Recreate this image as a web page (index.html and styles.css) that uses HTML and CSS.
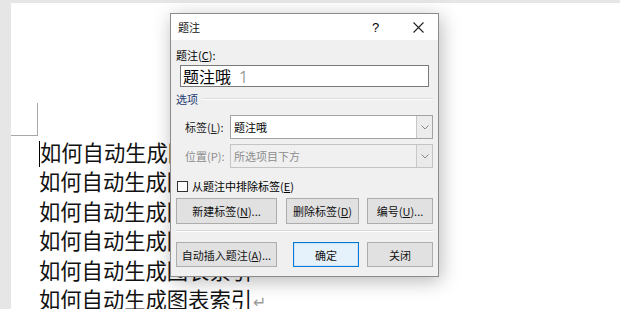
FILE: index.html
```html
<!DOCTYPE html>
<html lang="zh-CN">
<head>
<meta charset="utf-8">
<link rel="stylesheet" href="styles.css">
</head>
<body>
<div class="page">
  <div class="corner"></div>
  <div class="doc">
    <div class="line"><span class="cursor"></span>如何自动生成图表索引<span class="ret">↵</span></div>
    <div class="line">如何自动生成图表索引<span class="ret">↵</span></div>
    <div class="line">如何自动生成图表索引<span class="ret">↵</span></div>
    <div class="line">如何自动生成图表索引<span class="ret">↵</span></div>
    <div class="line">如何自动生成图表索引<span class="ret">↵</span></div>
    <div class="line">如何自动生成图表索引<span class="ret">↵</span></div>
  </div>
</div>

<div class="dialog">
  <div class="titlebar">
    <span class="title">题注</span>
    <span class="help">?</span>
    <span class="close"><svg width="11" height="11" viewBox="0 0 11 11"><path d="M0.5 0.5 L10.5 10.5 M10.5 0.5 L0.5 10.5" stroke="#222" stroke-width="1.1" fill="none"/></svg></span>
  </div>
  <div class="body">
    <div class="lbl">题注(<u>C</u>):</div>
    <div class="caption-input"><span class="cap-text">题注哦</span><span class="cap-num">1</span></div>
    <div class="group"><span class="group-title">选项</span><span class="group-line"></span></div>
    <div class="field">
      <span class="flabel">标签(<u>L</u>):</span>
      <div class="combo"><span class="combo-text">题注哦</span><span class="combo-btn"><svg width="8" height="5" viewBox="0 0 8 5"><path d="M0.5 0.5 L4 4 L7.5 0.5" stroke="#888" fill="none"/></svg></span></div>
    </div>
    <div class="field field2 disabled">
      <span class="flabel">位置(P):</span>
      <div class="combo"><span class="combo-text">所选项目下方</span><span class="combo-btn"><svg width="8" height="5" viewBox="0 0 8 5"><path d="M0.5 0.5 L4 4 L7.5 0.5" stroke="#888" fill="none"/></svg></span></div>
    </div>
    <div class="check"><span class="box"></span><span>从题注中排除标签(<u>E</u>)</span></div>
    <div class="btnrow row1">
      <span class="btn w101">新建标签(<u>N</u>)...</span>
      <span class="btn w73">删除标签(<u>D</u>)</span>
      <span class="btn w66">编号(<u>U</u>)...</span>
    </div>
    <div class="sep"></div>
    <div class="btnrow row2">
      <span class="btn w101">自动插入题注(<u>A</u>)...</span>
      <span class="btn w66 ok">确定</span>
      <span class="btn w66">关闭</span>
    </div>
  </div>
</div>
</body>
</html>
```

FILE: styles.css
```css
html, body {
  margin: 0;
  padding: 0;
}
body {
  background: #e6e6e6;
  width: 620px;
  height: 309px;
  overflow: hidden;
  position: relative;
  font-family: "Noto Sans CJK SC", "Noto Sans", sans-serif;
}
.page {
  margin-left: 11px;
  position: relative;
  top: 3px;
  background: #fff;
  height: 306px;
}
.corner {
  position: relative;
  top: 100px;
  width: 27px;
  height: 33px;
  border-right: 1px solid #a8a8a8;
  border-bottom: 1px solid #a8a8a8;
  box-sizing: border-box;
}
.doc {
  padding-left: 28px;
  padding-top: 101px;
  font-size: 21.3px;
  line-height: 29.4px;
  color: #111;
}
.line {
  white-space: nowrap;
  height: 29.4px;
}
.cursor {
  display: inline-block;
  width: 0;
  height: 26px;
  border-left: 1px solid #000;
  vertical-align: -6px;
}
.ret {
  color: #9a9a9a;
  font-size: 16px;
  margin-left: 1px;
  font-family: "DejaVu Sans", sans-serif;
}

.dialog {
  position: absolute;
  left: 170px;
  top: 13px;
  width: 269px;
  height: 264px;
  box-sizing: border-box;
  border: 1px solid #8c8c8c;
  background: #f0f0f0;
  box-shadow: 2px 4px 18px rgba(0,0,0,0.28);
  font-size: 11px;
  color: #000;
  display: flex;
  flex-direction: column;
}
.titlebar {
  height: 26px;
  background: #fff;
  display: flex;
  align-items: center;
  padding-left: 7px;
  flex-shrink: 0;
}
.title {
  flex: 1;
  color: #111;
}
.help {
  width: 14px;
  margin-right: 27px;
  font-family: "Liberation Sans", sans-serif;
  font-size: 13px;
}
.close {
  display: flex;
  margin-right: 14px;
}
.body {
  padding: 7px 5px 0 5px;
  display: flex;
  flex-direction: column;
}
.lbl {
  height: 16px;
  line-height: 16px;
}
u {
  text-decoration: underline;
  text-underline-offset: 1px;
}
.caption-input {
  margin-top: 2px;
  margin-left: 4px;
  width: 249px;
  height: 22px;
  box-sizing: border-box;
  border: 1px solid #7a7a7a;
  background: #fff;
  font-size: 16px;
  line-height: 20px;
  padding-left: 2px;
  white-space: pre;
}
.cap-num {
  color: #777;
  margin-left: 8px;
  font-family: "Noto Sans", sans-serif;
  font-weight: 300;
}
.group {
  margin-top: 4px;
  height: 16px;
  line-height: 16px;
  display: flex;
  align-items: center;
}
.group-title {
  color: #1f3a70;
}
.group-line {
  flex: 1;
  height: 0;
  border-top: 1px solid #dcdcdc;
  border-bottom: 1px solid #fff;
  margin-left: 4px;
}
.field {
  margin-top: 8px;
  display: flex;
  align-items: center;
  height: 24px;
}
.field2 {
  margin-top: 5px;
}
.flabel {
  width: 45px;
  padding-left: 9px;
  color: #222;
  white-space: nowrap;
}
.combo {
  width: 203px;
  height: 24px;
  box-sizing: border-box;
  border: 1px solid #a3a3a3;
  background: #fff;
  display: flex;
  align-items: center;
}
.combo-text {
  flex: 1;
  padding-left: 3px;
}
.combo-btn {
  width: 15px;
  height: 22px;
  border-left: 1px solid #c8c8c8;
  background: #ececec;
  display: flex;
  align-items: center;
  justify-content: center;
}
.disabled .flabel,
.disabled .combo-text {
  color: #8d8d8d;
}
.disabled .combo {
  background: #f0f0f0;
  border-color: #c4c4c4;
}
.disabled .combo-btn {
  background: #eaeaea;
}
.check {
  margin-top: 11px;
  height: 14px;
  display: flex;
  align-items: center;
}
.box {
  width: 11px;
  height: 11px;
  box-sizing: border-box;
  border: 1px solid #333;
  background: #fff;
  margin-left: 1px;
  margin-right: 4px;
}
.btnrow {
  display: flex;
}
.row1 {
  margin-top: 5px;
  gap: 9px;
}
.row1 .btn {
  height: 26px;
}
.row1 .w66 {
  margin-left: -1px;
}
.row2 {
  margin-top: 10px;
}
.row2 .btn {
  height: 25px;
}
.row2 .ok {
  margin-left: 16px;
  margin-right: 8px;
}
.btn {
  box-sizing: border-box;
  border: 1px solid #adadad;
  background: #e1e1e1;
  display: flex;
  align-items: center;
  justify-content: center;
  white-space: nowrap;
  color: #111;
}
.w101 { width: 101px; }
.w73 { width: 73px; }
.w66 { width: 66px; }
.btn.ok {
  background: #e5f1fb;
  border: 1px solid #0078d7;
  box-shadow: inset 0 0 0 1px #cfe4f7;
}
.sep {
  margin-top: 6px;
  height: 0;
  border-top: 1px solid #dadada;
  border-bottom: 1px solid #fff;
}
```
